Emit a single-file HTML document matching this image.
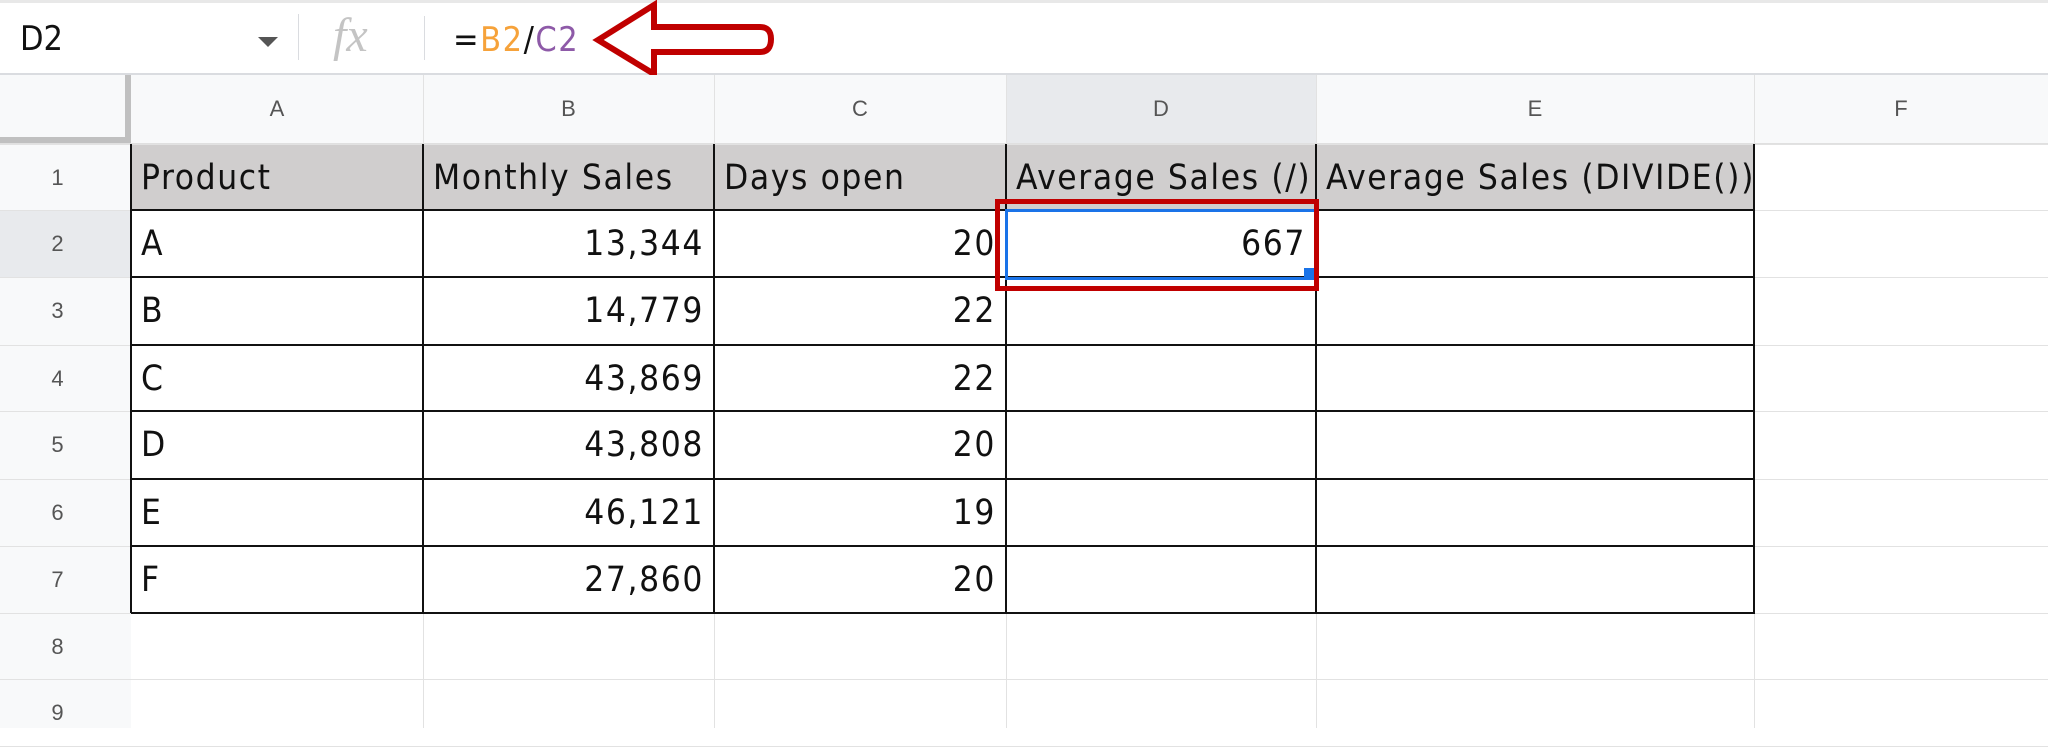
<!DOCTYPE html>
<html><head><style>
body{margin:0;width:2048px;height:728px;overflow:hidden;background:#fff;font-family:"Liberation Sans",sans-serif;position:relative}
.a{position:absolute}
.t{position:absolute;font-size:35px;letter-spacing:1.6px;color:#111;white-space:nowrap;font-family:"DejaVu Sans Condensed","Liberation Sans",sans-serif}
.h{position:absolute;font-size:22px;color:#555;text-align:center}
</style></head><body>
<div class="a" style="left:0;top:0;width:2048px;height:3px;background:#e8e8e8"></div>
<div class="a" style="left:0;top:73px;width:2048px;height:2px;background:#dadce0"></div>
<div class="t" style="left:20px;top:19px;font-size:34px;letter-spacing:0">D2</div>
<div class="a" style="left:258px;top:37px;width:0;height:0;border-left:10px solid transparent;border-right:10px solid transparent;border-top:10px solid #555"></div>
<div class="a" style="left:298px;top:14px;width:1px;height:46px;background:#dadce0"></div>
<div class="a" style="left:333px;top:8px;font-family:'Liberation Serif',serif;font-style:italic;font-size:48px;color:#c4c4c4">fx</div>
<div class="a" style="left:424px;top:16px;width:1px;height:44px;background:#dadce0"></div>
<div class="t" style="left:453px;top:20px;font-size:34px;letter-spacing:1.5px">=<span style="color:#f6a23a">B2</span>/<span style="color:#8e5aa8">C2</span></div>
<svg class="a" style="left:0;top:0" width="2048" height="80"><path d="M598 40 L654 5 L654 27 L760 27 Q771 27 771 39 Q771 52 760 52 L654 52 L654 74 Z" fill="none" stroke="#c00000" stroke-width="6" stroke-linejoin="miter"/></svg>
<div class="a" style="left:0;top:75px;width:2048px;height:69px;background:#f8f9fa"></div>
<div class="a" style="left:1006px;top:75px;width:310px;height:69px;background:#e8eaed"></div>
<div class="a" style="left:0;top:75px;width:131px;height:653px;background:#f8f9fa"></div>
<div class="a" style="left:0;top:210px;width:131px;height:67px;background:#e8eaed"></div>
<div class="a" style="left:0;top:137px;width:131px;height:6px;background:#c0c0c0"></div>
<div class="a" style="left:125px;top:75px;width:6px;height:68px;background:#c0c0c0"></div>
<div class="a" style="left:0;top:143px;width:2048px;height:1px;background:#e0e0e0"></div>
<div class="a" style="left:131px;top:144px;width:1623px;height:66px;background:#d0cece"></div>
<div id="g"></div>
<script>
const cols=[131,423,714,1006,1316,1754,2048];
const rows=[144,210,277,345,411,479,546,613,679,746];
let s='';
for(const x of cols.slice(1)) s+=`<div class="a" style="left:${x}px;top:75px;width:1px;height:653px;background:#e2e2e2"></div>`;
for(const y of rows) s+=`<div class="a" style="left:0;top:${y}px;width:2048px;height:1px;background:#e2e2e2"></div>`;
for(let i=0;i<6;i++) s+=`<div class="a" style="left:${cols[i]-1}px;top:144px;width:2px;height:469px;background:#111"></div>`;
for(let j=1;j<8;j++) s+=`<div class="a" style="left:131px;top:${rows[j]-1}px;width:1624px;height:2px;background:#111"></div>`;
const L='ABCDEF';
for(let i=0;i<6;i++) s+=`<div class="h" style="left:${cols[i]}px;top:96px;width:${cols[i+1]-cols[i]}px">${L[i]}</div>`;
for(let j=0;j<9;j++) s+=`<div class="h" style="left:0;top:${rows[j]+21}px;width:115px">${j+1}</div>`;
const data=[["Product","Monthly Sales","Days open","Average Sales (/)","Average Sales (DIVIDE())"],
["A","13,344","20","667"],["B","14,779","22"],["C","43,869","22"],["D","43,808","20"],["E","46,121","19"],["F","27,860","20"]];
data.forEach((r,j)=>r.forEach((v,i)=>{
 const top=rows[j]+14;
 if(j==0||i==0) s+=`<div class="t" style="left:${cols[i]+10}px;top:${top}px">${v}</div>`;
 else s+=`<div class="t" style="left:${cols[i]}px;top:${top}px;width:${cols[i+1]-cols[i]-10}px;text-align:right">${v}</div>`;
}));
document.getElementById('g').innerHTML=s;
</script>
<div class="a" style="left:1005px;top:209px;width:306px;height:65px;border:3px solid #1a73e8"></div>
<div class="a" style="left:1304px;top:268px;width:12px;height:12px;background:#1a73e8"></div>
<div class="a" style="left:995px;top:199px;width:314px;height:82px;border:5px solid #c00000"></div>
</body></html>
